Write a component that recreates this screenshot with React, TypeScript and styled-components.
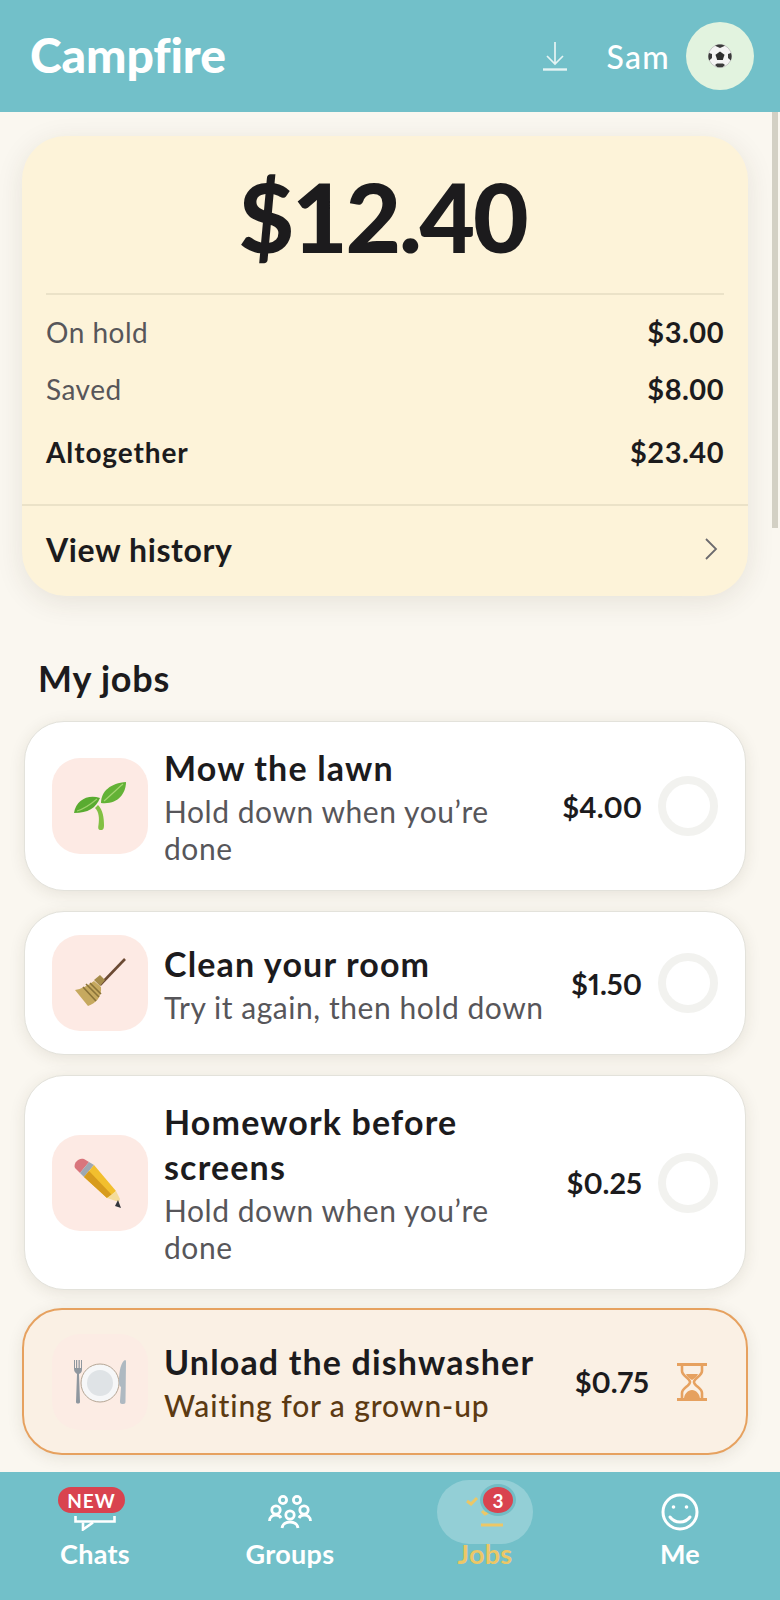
import React from "react";
import styled, { createGlobalStyle } from "styled-components";

const Global = createGlobalStyle`
  html, body { margin: 0; padding: 0; height: 100%; overflow: hidden; background: #faf7f0; }
  body { font-family: "Lato", "Noto Sans", sans-serif; color: #1c1b1d; }
  * { box-sizing: border-box; }
`;

const Screen = styled.div`
  position: relative;
  width: 780px;
  height: 1600px;
  display: flex;
  flex-direction: column;
  overflow: hidden;
`;

const Header = styled.header`
  height: 112px;
  flex: none;
  background: #72c0c9;
  display: flex;
  align-items: center;
  padding: 0 26px 0 30px;
  color: #fff;
`;

const Logo = styled.div`
  font-size: 48px;
  font-weight: 900;
  letter-spacing: -0.1px;
  flex: 1;
  margin-top: -3px;
`;

const DownloadButton = styled.span`
  display: flex;
  margin-right: 38px;
`;

const UserName = styled.span`
  font-size: 32px;
  font-weight: 500;
  margin-right: 16px;
  letter-spacing: 1.3px;
`;

const Avatar = styled.div`
  width: 68px;
  height: 68px;
  border-radius: 50%;
  background: #e2f3df;
  display: flex;
  align-items: center;
  justify-content: center;
`;

const Main = styled.main`
  flex: 1;
  min-height: 0;
  overflow: hidden;
  padding: 24px 32px 0 22px;
`;

const ScrollThumb = styled.div`
  position: absolute;
  right: 2px;
  top: 112px;
  width: 6px;
  height: 416px;
  background: #d3d0c4;
`;

const BalanceCard = styled.section`
  background: #fdf3d9;
  border-radius: 44px;
  width: 726px;
  height: 460px;
  box-shadow: 0 6px 28px rgba(60, 50, 30, 0.1);
  display: flex;
  flex-direction: column;
`;

const Amount = styled.div`
  height: 159px;
  margin: 0 24px;
  border-bottom: 2px solid #ebe2c8;
  display: flex;
  align-items: center;
  justify-content: center;
  font-size: 96px;
  font-weight: 900;
  letter-spacing: -2.2px;
  padding: 2px 5px 0 0;
`;

const Rows = styled.div`
  flex: 1;
  padding: 8px 24px 0;
  border-bottom: 2px solid #ebe2c8;
`;

const Row = styled.div<{ $strong?: boolean }>`
  display: flex;
  justify-content: space-between;
  align-items: center;
  height: ${(p) => (p.$strong ? 69 : 57)}px;
  font-size: 28px;
  letter-spacing: ${(p) => (p.$strong ? 0.9 : 0.5)}px;
  color: ${(p) => (p.$strong ? "#1c1b1d" : "#57565a")};
  font-weight: ${(p) => (p.$strong ? 700 : 400)};
`;

const RowValue = styled.span`
  color: #1c1b1d;
  font-weight: 700;
  font-size: 29px;
  letter-spacing: 0.5px;
`;

const HistoryRow = styled.div`
  height: 90px;
  flex: none;
  display: flex;
  align-items: center;
  justify-content: space-between;
  padding: 0 30px 4px 24px;
  font-size: 32px;
  font-weight: 700;
  letter-spacing: 0.6px;
`;

const SectionTitle = styled.h2`
  margin: 60px 0 21px 16px;
  font-size: 36px;
  line-height: 44px;
  font-weight: 700;
  letter-spacing: 0.8px;
`;

const JobList = styled.div`
  display: flex;
  flex-direction: column;
  gap: 20px;
`;

const JobCard = styled.article<{ $waiting?: boolean }>`
  display: flex;
  align-items: center;
  width: ${(p) => (p.$waiting ? 726 : 722)}px;
  margin-left: ${(p) => (p.$waiting ? 0 : 2)}px;
  margin-top: ${(p) => (p.$waiting ? -2 : 0)}px;
  padding: ${(p) => (p.$waiting ? "23.5px 39px 23.5px 28px" : "23px 27px")};
  border-radius: 40px;
  background: ${(p) => (p.$waiting ? "#faf0e4" : "#fff")};
  border: ${(p) => (p.$waiting ? "2px solid #e6a15f" : "1px solid #e3e2db")};
  box-shadow: 0 3px 16px rgba(60, 50, 30, 0.1);
`;

const IconTile = styled.div<{ $faded?: boolean }>`
  width: 96px;
  height: 96px;
  flex: none;
  border-radius: 28px;
  background: ${(p) => (p.$faded ? "#fcece4" : "#fdeae4")};
  display: flex;
  align-items: center;
  justify-content: center;
`;

const JobText = styled.div`
  flex: 1;
  min-width: 0;
  margin-left: 16px;
`;

const JobTitle = styled.div`
  font-size: 34px;
  line-height: 45px;
  font-weight: 700;
  letter-spacing: 1.15px;
`;

const JobSub = styled.div<{ $waiting?: boolean }>`
  margin-top: 3px;
  font-size: 30px;
  line-height: 37px;
  letter-spacing: ${(p) => (p.$waiting ? 0.9 : 0.55)}px;
  color: ${(p) => (p.$waiting ? "#5c3a12" : "#57565a")};
  font-weight: ${(p) => (p.$waiting ? 500 : 400)};
`;

const JobPrice = styled.div<{ $waiting?: boolean }>`
  flex: none;
  font-size: 29px;
  font-weight: 700;
  font-variant-numeric: proportional-nums;
  margin: ${(p) => (p.$waiting ? "0 28px 0 12px" : "0 16px 0 16px")};
`;

const Ring = styled.div`
  width: 60px;
  height: 60px;
  flex: none;
  border-radius: 50%;
  border: 8px solid #f2f2ef;
`;

const Nav = styled.nav`
  height: 128px;
  flex: none;
  background: #72c0c9;
  display: grid;
  grid-template-columns: repeat(4, 190px);
  gap: 5px;
`;

const NavItem = styled.div<{ $active?: boolean }>`
  position: relative;
  display: flex;
  flex-direction: column;
  align-items: center;
  padding-top: 8px;
  color: ${(p) => (p.$active ? "#ecc766" : "#fff")};
`;

const NavIcon = styled.div<{ $active?: boolean }>`
  position: relative;
  width: 96px;
  height: 64px;
  border-radius: 32px;
  background: ${(p) => (p.$active ? "rgba(255,255,255,0.24)" : "transparent")};
  display: flex;
  align-items: center;
  justify-content: center;
`;

const ChatShift = styled.span`
  display: flex;
  margin-top: 22px;
`;

const NavLabel = styled.div`
  font-size: 27px;
  line-height: 32px;
  font-weight: 700;
  letter-spacing: 0.3px;
  margin-top: -6px;
`;

const NewBadge = styled.span`
  position: absolute;
  left: 11px;
  top: 7px;
  width: 67px;
  height: 26px;
  border-radius: 13px;
  background: #d9434f;
  color: #fff;
  font-size: 19px;
  font-weight: 700;
  letter-spacing: 1px;
  display: flex;
  align-items: center;
  justify-content: center;
`;

const CountBadge = styled.span`
  position: absolute;
  left: 43px;
  top: 4px;
  width: 36px;
  height: 32px;
  border-radius: 50%;
  background: #d9434f;
  border: 3px solid #72bcc5;
  color: #fff;
  font-size: 19px;
  font-weight: 700;
  display: flex;
  align-items: center;
  justify-content: center;
`;

const Sprout = () => (
  <svg width="54" height="50" viewBox="0 0 54 50">
    <path d="M28 49c-3 0-3-2-2.500-5 1-7 .5-13-3.500-17l3-3c5 5 6 13 6 20 0 3-.5 5-3 5z" fill="#82c043" />
    <path d="M1 32C3 19 15 13 27 17c-4 10-12 15-26 15z" fill="#59ab30" />
    <path d="M4 30c7-2 14-7 20-12" stroke="#9ed06a" strokeWidth="1.200" fill="none" />
    <path d="M28 22C28 10 38 2 53 1c0 12-9 23-25 21z" fill="#63b236" />
    <path d="M31 20c6-5 12-11 19-17" stroke="#a5d672" strokeWidth="1.200" fill="none" />
  </svg>
);

const Broom = () => (
  <svg width="52" height="50" viewBox="0 0 52 50">
    <path d="M26 27L51 1" stroke="#6b4a33" strokeWidth="2.600" />
    <path d="M1 32l13 16c8-3 14-9 13-19l-7-6C13 28 7 31 1 32z" fill="#c6a95f" />
    <path d="M12 26l13 13M9 29l13 14M16 25l11 11" stroke="#8a7338" strokeWidth="1.600" />
    <path d="M20 22l6-5 5 5-5 6z" fill="#a68c4b" />
  </svg>
);

const Pencil = () => (
  <svg width="52" height="52" viewBox="0 0 52 52">
    <path d="M1 11C-1 7 4 0 10 2l5 3-9 11z" fill="#d9757c" />
    <path d="M6 16l9-11 5 3-10 12z" fill="#9da8b3" />
    <path d="M10 20L20 8l22 26-4 4-5 3z" fill="#f2bf2e" />
    <path d="M15 14l23 24-5 3L10 20z" fill="#d79b1d" />
    <path d="M33 41l9-7 4 8-1 3z" fill="#f4dc9b" />
    <path d="M44 43l3 8-6-2z" fill="#33363d" />
  </svg>
);

const PlateSetting = () => (
  <svg width="54" height="46" viewBox="0 0 54 46">
    <path d="M1 1v9c0 3 2 4 3 5l-1 28c0 2 4 2 4 0l-1-28c2-1 3-2 3-5V1H8v8H6.800V1H5.500v8H4.200V1H3v8H2V1z" fill="#8f979f" />
    <circle cx="27" cy="24" r="19" fill="#f6f7f8" stroke="#b5a695" strokeWidth="1" />
    <circle cx="27" cy="24" r="13" fill="#dfe3e6" />
    <path d="M50 45c-3 0-3-1-3-3l1-14c-2-1-2-3-2-6 0-10 2-19 6-21 1 0 1 1 1 2l-.5 39c0 2 0 3-2.500 3z" fill="#aeb9c1" />
  </svg>
);

const Ball = () => (
  <svg width="24" height="24" viewBox="0 0 24 24">
    <circle cx="12" cy="12" r="11.500" fill="#f4f4f4" stroke="#a9a9a9" strokeWidth=".6" />
    <path d="M12 7.500l4.500 3.300-1.700 5.200H9.200L7.500 10.800z" fill="#2e2e2e" />
    <path d="M12 .5c-2 0-3.500.4-5 1.300L12 4l5-2.200C15.500 1 14 .5 12 .5zM1 9c-1 2.500-.8 5 .2 7.500L4 14V10zM23 9l-3 1v4l2.800 2.500c1-2.500 1.200-5 .2-7.500zM7 21l2.500 2.300h5L17 21l-2-1.500H9z" fill="#3a3a3a" />
  </svg>
);

const Hourglass = () => (
  <svg width="30" height="38" viewBox="0 0 30 38" style={{ flex: "none" }}>
    <path d="M0 1.500h30M0 36.500h30" stroke="#e6a15f" strokeWidth="3" />
    <path d="M5 2v6c0 5 8 7 8 11s-8 6-8 11v6M25 2v6c0 5-8 7-8 11s8 6 8 11v6" stroke="#e6a15f" strokeWidth="2.600" fill="none" />
    <path d="M9 11h12c-1 3-4 5-6 6-2-1-5-3-6-6zM7 36c0-5 4-9 8-9s8 4 8 9z" fill="#e6a15f" />
  </svg>
);

const DownloadIcon = () => (
  <svg width="26" height="30" viewBox="0 0 26 30" fill="none" stroke="#e6f4f4" strokeWidth="1.700">
    <path d="M13 1v21M5 15l8 8 8-8" />
    <path d="M1 28.500h24" strokeWidth="2.400" />
  </svg>
);

const Chevron = () => (
  <svg width="14" height="22" viewBox="0 0 14 22" fill="none" stroke="#6b6a6e" strokeWidth="1.800">
    <path d="M2 1l10 10L2 21" />
  </svg>
);

const ChatIcon = () => (
  <svg width="42" height="15" viewBox="0 0 42 15" fill="none" stroke="#fff" strokeWidth="2.600">
    <path d="M1.500 0v5.500h39V0" />
    <path d="M9 6.500v7l10-7" />
  </svg>
);

const GroupsIcon = () => (
  <svg width="44" height="34" viewBox="0 0 44 34" fill="none" stroke="#fff" strokeWidth="2.800">
    <circle cx="15" cy="5" r="3.600" />
    <circle cx="29" cy="5" r="3.600" />
    <circle cx="8" cy="15" r="4.200" />
    <circle cx="36" cy="15" r="4.200" />
    <circle cx="22" cy="20" r="4.200" />
    <path d="M1.500 26c0-4 3-6 6.500-6 2 0 4 1 5 3M42.500 26c0-4-3-6-6.500-6-2 0-4 1-5 3M14 33c.5-4 4-6 8-6s7.500 2 8 6" />
  </svg>
);

const SmileIcon = () => (
  <svg width="38" height="38" viewBox="0 0 38 38" fill="none" stroke="#fff" strokeWidth="3">
    <circle cx="19" cy="19" r="17" />
    <path d="M9 24c3 4 6 5 10 5s7-1 10-5" strokeLinecap="round" />
    <circle cx="12.500" cy="14" r="1.800" fill="#fff" stroke="none" />
    <circle cx="25.500" cy="14" r="1.800" fill="#fff" stroke="none" />
  </svg>
);

const JobsIcon = () => (
  <svg width="96" height="64" viewBox="0 0 96 64" fill="none" stroke="#ecc766" strokeWidth="3" style={{ position: "absolute", inset: 0 }}>
    <path d="M30 21l4 3 6-6" />
    <path d="M45 31l3 3 6-3" />
    <path d="M44 45h22" />
  </svg>
);

type Job = {
  title: string;
  sub: string;
  price: string;
  icon: React.ReactNode;
  waiting?: boolean;
};

const jobs: Job[] = [
  { title: "Mow the lawn", sub: "Hold down when you’re done", price: "$4.00", icon: <Sprout /> },
  { title: "Clean your room", sub: "Try it again, then hold down", price: "$1.50", icon: <Broom /> },
  { title: "Homework before screens", sub: "Hold down when you’re done", price: "$0.25", icon: <Pencil /> },
  { title: "Unload the dishwasher", sub: "Waiting for a grown-up", price: "$0.75", icon: <PlateSetting />, waiting: true },
];

export default function App() {
  return (
    <Screen>
      <Global />
      <Header>
        <Logo>Campfire</Logo>
        <DownloadButton>
          <DownloadIcon />
        </DownloadButton>
        <UserName>Sam</UserName>
        <Avatar>
          <Ball />
        </Avatar>
      </Header>
      <Main>
        <BalanceCard>
          <Amount>$12.40</Amount>
          <Rows>
            <Row>
              <span>On hold</span>
              <RowValue>$3.00</RowValue>
            </Row>
            <Row>
              <span>Saved</span>
              <RowValue>$8.00</RowValue>
            </Row>
            <Row $strong>
              <span>Altogether</span>
              <RowValue>$23.40</RowValue>
            </Row>
          </Rows>
          <HistoryRow>
            <span>View history</span>
            <Chevron />
          </HistoryRow>
        </BalanceCard>
        <SectionTitle>My jobs</SectionTitle>
        <JobList>
          {jobs.map((job) => (
            <JobCard key={job.title} $waiting={job.waiting}>
              <IconTile $faded={job.waiting}>{job.icon}</IconTile>
              <JobText>
                <JobTitle>{job.title}</JobTitle>
                <JobSub $waiting={job.waiting}>{job.sub}</JobSub>
              </JobText>
              <JobPrice $waiting={job.waiting}>{job.price}</JobPrice>
              {job.waiting ? <Hourglass /> : <Ring />}
            </JobCard>
          ))}
        </JobList>
      </Main>
      <Nav>
        <NavItem>
          <NavIcon>
            <NewBadge>NEW</NewBadge>
            <ChatShift>
              <ChatIcon />
            </ChatShift>
          </NavIcon>
          <NavLabel>Chats</NavLabel>
        </NavItem>
        <NavItem>
          <NavIcon>
            <GroupsIcon />
          </NavIcon>
          <NavLabel>Groups</NavLabel>
        </NavItem>
        <NavItem $active>
          <NavIcon $active>
            <JobsIcon />
            <CountBadge>3</CountBadge>
          </NavIcon>
          <NavLabel>Jobs</NavLabel>
        </NavItem>
        <NavItem>
          <NavIcon>
            <SmileIcon />
          </NavIcon>
          <NavLabel>Me</NavLabel>
        </NavItem>
      </Nav>
      <ScrollThumb />
    </Screen>
  );
}
